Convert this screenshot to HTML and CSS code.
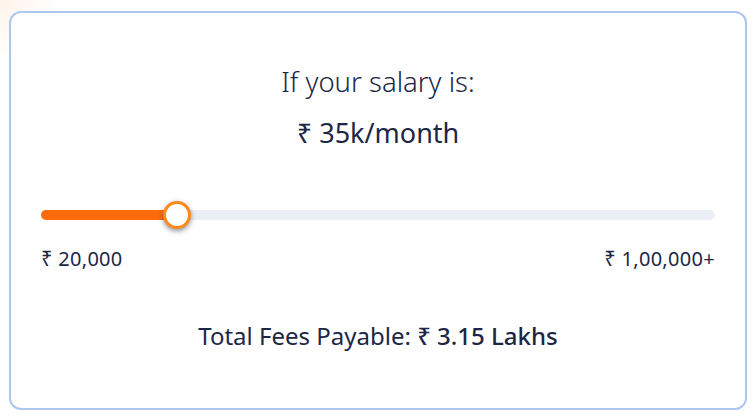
FILE: index.html
```html
<!DOCTYPE html>
<html lang="en">
<head>
    <meta charset="UTF-8">
    <meta name="viewport" content="width=device-width, initial-scale=1.0">
    <title>Fee Calculator</title>
    <link rel="stylesheet" href="styles.css">
</head>
<body>
    <div class="card">
        <h2 class="question">If your salary is:</h2>
        <div class="salary">₹ 35k/month</div>

        <div class="slider">
            <div class="track">
                <div class="fill" style="width: 20.2%;"></div>
                <div class="thumb" style="left: 20.2%;"></div>
            </div>
            <div class="range-labels">
                <span>₹ 20,000</span>
                <span>₹ 1,00,000+</span>
            </div>
        </div>

        <p class="total">Total Fees Payable: <strong>₹ 3.15 Lakhs</strong></p>
    </div>
</body>
</html>
```

FILE: styles.css
```css
/* Reset */
* {
    margin: 0;
    padding: 0;
    box-sizing: border-box;
}

body {
    font-family: 'Noto Sans', sans-serif;
    color: #1c2745;
    background: radial-gradient(circle at 0 0, #fff3ea 0, #ffffff 60px);
    height: 418px;
    overflow: hidden;
}

/* Card */
.card {
    width: 738px;
    height: 399px;
    margin: 11px 0 0 9px;
    border: 2px solid #adc6ee;
    border-radius: 12px;
    background-color: #ffffff;
    padding: 51px 30px 0 30px;
    display: flex;
    flex-direction: column;
    align-items: center;
}

.question {
    font-size: 27.5px;
    font-weight: 300;
    line-height: 36px;
}

.salary {
    font-size: 27px;
    font-weight: 400;
    line-height: 34px;
    margin-top: 16px;
}

/* Slider */
.slider {
    width: 100%;
    margin-top: 60px;
}

.track {
    position: relative;
    height: 10px;
    border-radius: 5px;
    background-color: #eceff5;
}

.fill {
    height: 100%;
    border-radius: 5px;
    background-color: #ff6b0a;
}

.thumb {
    position: absolute;
    top: 50%;
    width: 28px;
    height: 28px;
    margin: -14px 0 0 -14px;
    border: 3px solid #ff8a1c;
    border-radius: 50%;
    background-color: #ffffff;
    box-shadow: 0 2px 5px rgba(30, 40, 70, 0.5);
}

.range-labels {
    display: flex;
    justify-content: space-between;
    margin-top: 26px;
    font-size: 20px;
    line-height: 26px;
    letter-spacing: 0.3px;
}

.total {
    margin-top: 48px;
    font-size: 24px;
    line-height: 32px;
}

.total strong {
    font-weight: 500;
}
```
